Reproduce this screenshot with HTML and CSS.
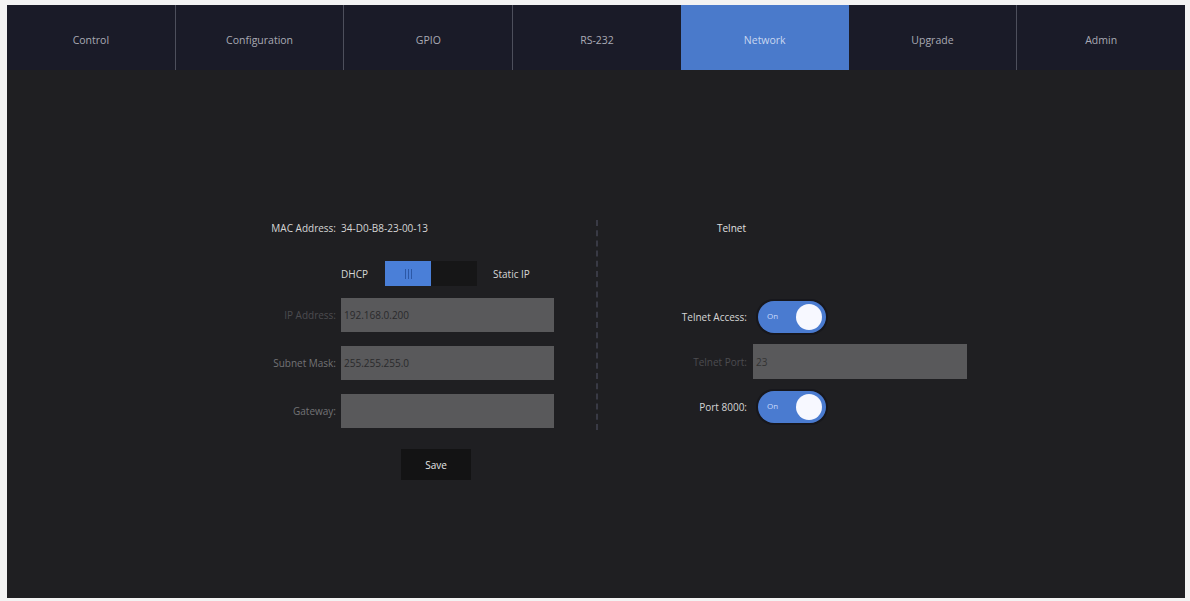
FILE: index.html
```html
<!DOCTYPE html>
<html lang="en">
<head>
  <meta charset="UTF-8">
  <title>Network</title>
  <link rel="stylesheet" href="styles.css">
</head>
<body>
  <div class="frame">
    <nav class="tabs">
      <div class="tab">Control</div>
      <div class="tab">Configuration</div>
      <div class="tab">GPIO</div>
      <div class="tab">RS-232</div>
      <div class="tab active">Network</div>
      <div class="tab">Upgrade</div>
      <div class="tab">Admin</div>
    </nav>

    <main class="content">
      <!-- IP settings -->
      <section class="col-left">
        <div class="row mac-row">
          <span class="label">MAC Address:</span>
          <span class="value">34-D0-B8-23-00-13</span>
        </div>
        <div class="row mode-row">
          <span class="label"></span>
          <div class="mode">
            <span class="mode-text">DHCP</span>
            <div class="segment">
              <div class="seg-on"><i></i><i></i><i></i></div>
              <div class="seg-off"></div>
            </div>
            <span class="mode-text static">Static IP</span>
          </div>
        </div>
        <div class="row field-row">
          <span class="label dim">IP Address:</span>
          <div class="field">192.168.0.200</div>
        </div>
        <div class="row field-row">
          <span class="label mid">Subnet Mask:</span>
          <div class="field">255.255.255.0</div>
        </div>
        <div class="row field-row">
          <span class="label mid">Gateway:</span>
          <div class="field"></div>
        </div>
        <div class="save-row">
          <button class="save">Save</button>
        </div>
      </section>

      <div class="divider"></div>

      <!-- Telnet settings -->
      <section class="col-right">
        <div class="heading">Telnet</div>
        <div class="row toggle-row first">
          <span class="label">Telnet Access:</span>
          <div class="switch"><span>On</span><b></b></div>
        </div>
        <div class="row port-row">
          <span class="label dim">Telnet Port:</span>
          <div class="field">23</div>
        </div>
        <div class="row toggle-row">
          <span class="label">Port 8000:</span>
          <div class="switch"><span>On</span><b></b></div>
        </div>
      </section>
    </main>
  </div>
</body>
</html>
```

FILE: styles.css
```css
body {
  margin: 0;
  background: #f3f3f3;
  font-family: "Open Sans", "Noto Sans", sans-serif;
}
.frame {
  width: 1178px;
  height: 593px;
  margin: 5px 0 0 7px;
  background: #1f1f22;
  display: flex;
  flex-direction: column;
}

/* top tabs */
.tabs {
  display: flex;
  height: 65px;
  background: #1a1b28;
}
.tab {
  flex: 1;
  display: flex;
  align-items: center;
  justify-content: center;
  padding-top: 4px;
  font-size: 10.5px;
  color: #a9aab4;
  border-left: 1px solid #4d4f5c;
}
.tab:first-child {
  border-left: none;
}
.tab.active {
  background: #4a7acb;
  color: #c9d7f0;
  border-left: none;
}
.tab.active + .tab {
  border-left: none;
}

/* main area */
.content {
  flex: 1;
  display: flex;
  align-items: flex-start;
  padding: 150px 0 0 233px;
}
.row {
  display: flex;
  align-items: center;
}
.label {
  font-size: 10px;
  color: #d6d6d6;
  text-align: right;
}
.label.dim {
  color: #4c4c50;
}
.label.mid {
  color: #737376;
}

.col-left .label {
  width: 96px;
  margin-right: 5px;
}
.mac-row {
  height: 16px;
}
.value {
  font-size: 10px;
  color: #d6d6d6;
}
.mode-row {
  margin-top: 25px;
}
.mode {
  display: flex;
  align-items: center;
}
.mode-text {
  font-size: 10px;
  color: #d6d6d6;
  width: 44px;
}
.mode-text.static {
  margin-left: 16px;
}
.segment {
  display: flex;
  height: 25px;
}
.seg-on {
  width: 46px;
  background: #4a7fd8;
  display: flex;
  align-items: center;
  justify-content: center;
  gap: 2px;
}
.seg-on i {
  width: 1px;
  height: 10px;
  background: #2c58a6;
}
.seg-off {
  width: 46px;
  background: #161617;
}
.field-row {
  margin-top: 14px;
}
.mode-row + .field-row {
  margin-top: 12px;
}
.field {
  width: 213px;
  height: 34px;
  box-sizing: border-box;
  padding: 0 3px;
  display: flex;
  align-items: center;
  background: #59595b;
  font-size: 10px;
  color: #2a2a2c;
}
.save-row {
  margin-top: 21px;
  padding-left: 161px;
}
.save {
  width: 70px;
  height: 31px;
  border: none;
  background: #131314;
  color: #e6e6e6;
  font-family: inherit;
  font-size: 10px;
}

.divider {
  width: 0;
  height: 210px;
  margin-left: 42px;
  border-left: 2px dashed #393a45;
}

/* telnet */
.col-right {
  margin-left: 62px;
}
.col-right .label {
  width: 87px;
  margin-right: 6px;
}
.heading {
  height: 16px;
  line-height: 16px;
  padding-left: 57px;
  font-size: 10px;
  color: #e0e0e0;
}
.toggle-row {
  height: 33px;
  margin-top: 11px;
}
.toggle-row.first {
  margin-top: 64px;
}
.port-row {
  margin-top: 11px;
}
.port-row .field {
  width: 214px;
  height: 35px;
  color: #333;
}
.switch {
  position: relative;
  width: 68px;
  height: 32px;
  margin-left: 5px;
  border-radius: 16px;
  background: #4a7bd0;
  box-shadow: 0 0 0 2px #17171c;
}
.switch span {
  position: absolute;
  left: 9px;
  top: 9px;
  font-size: 8px;
  color: #c8dafc;
}
.switch b {
  position: absolute;
  right: 4px;
  top: 3px;
  width: 26px;
  height: 26px;
  border-radius: 50%;
  background: #f7f8ff;
}
```
